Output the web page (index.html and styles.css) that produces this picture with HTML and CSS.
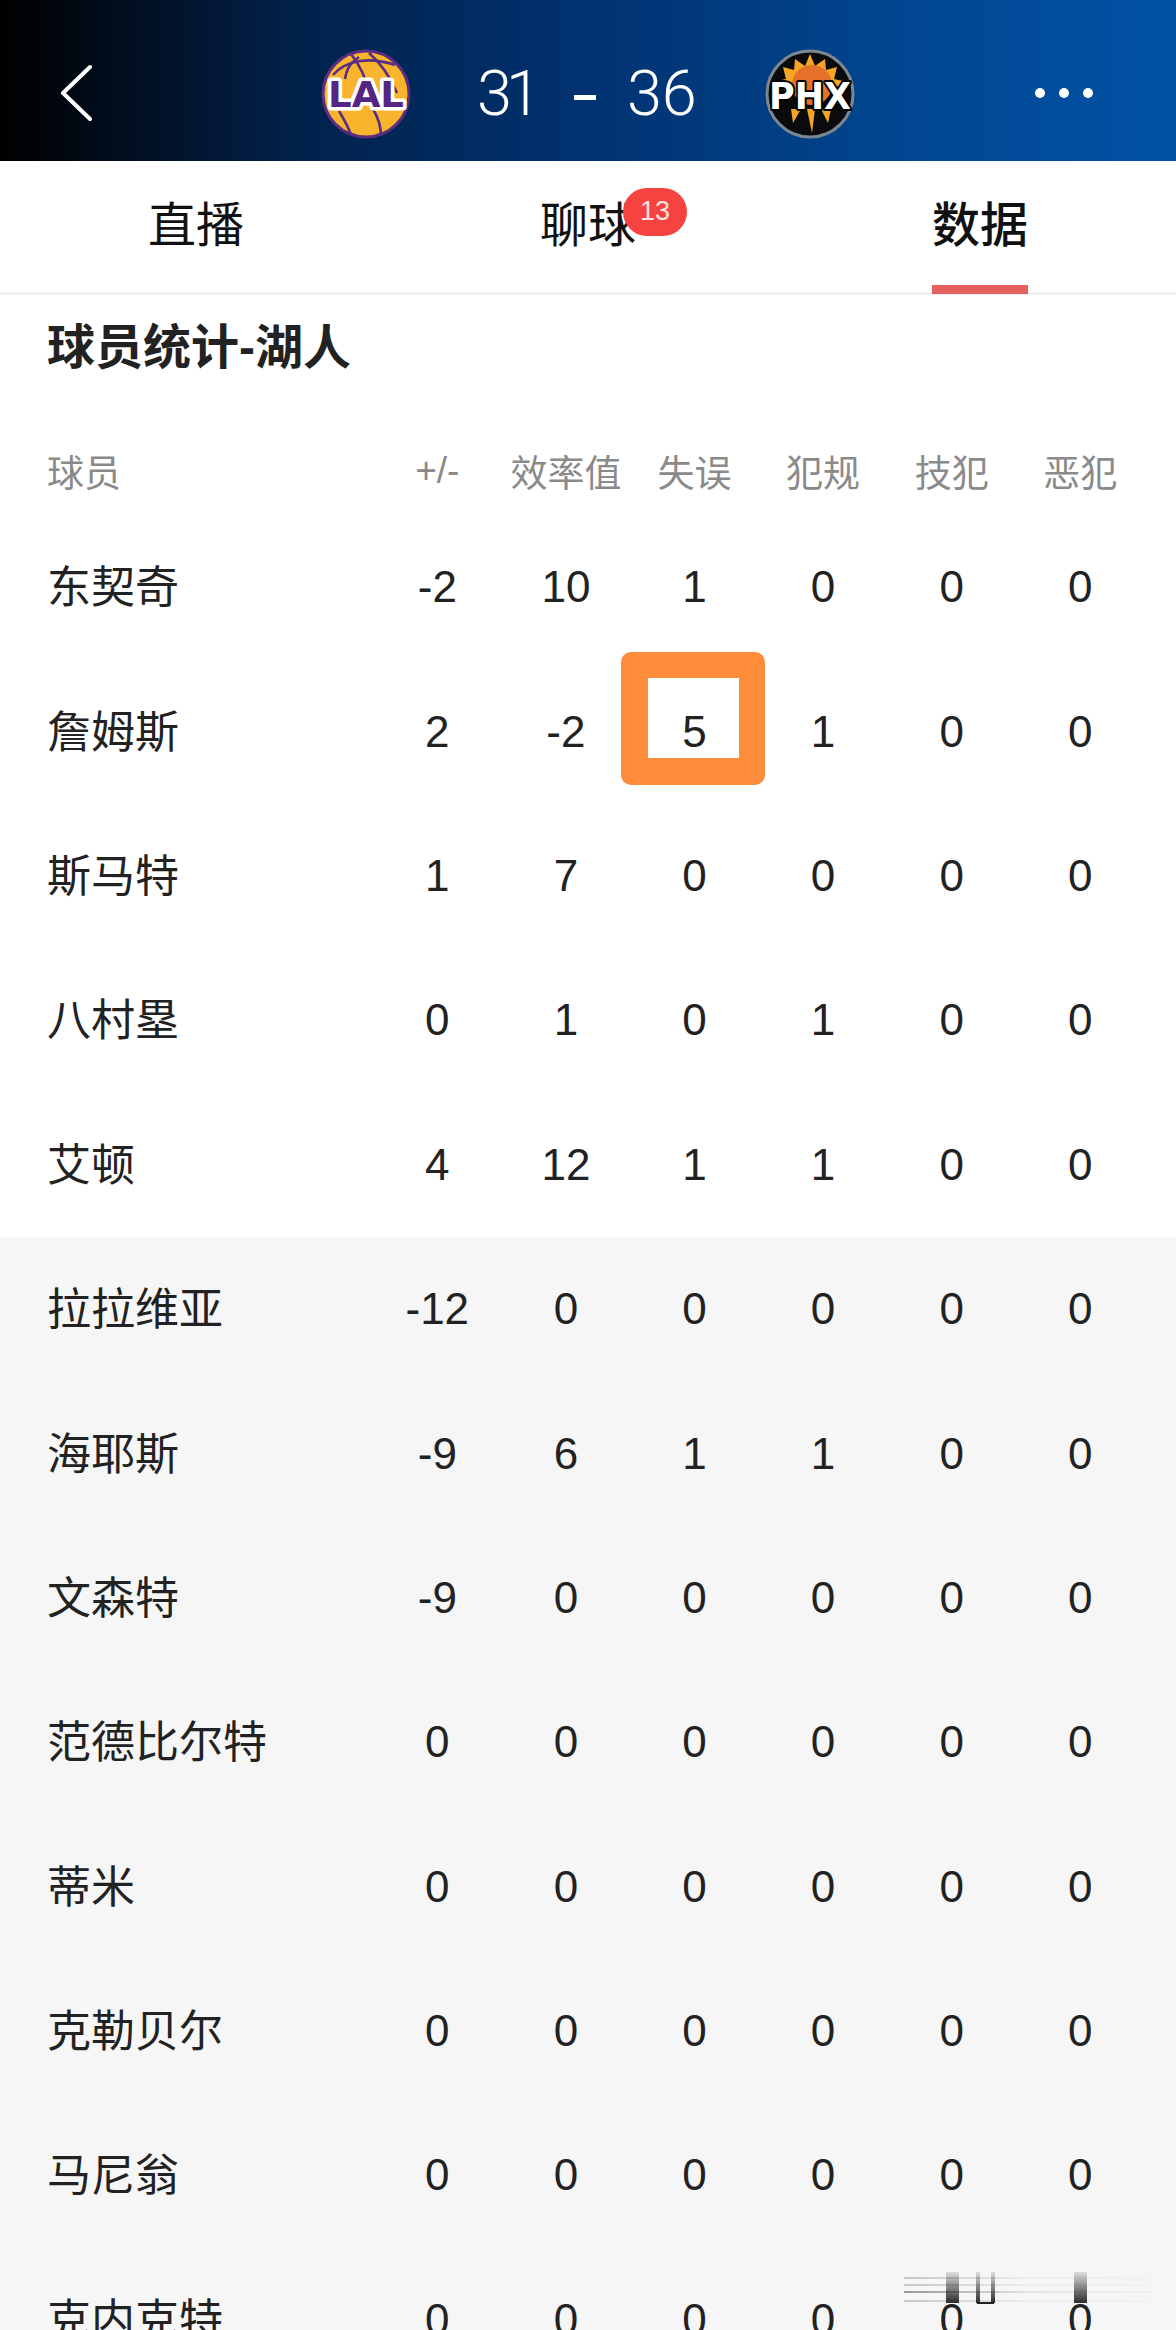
FILE: index.html
```html
<!DOCTYPE html>
<html lang="zh-CN">
<head>
<meta charset="utf-8">
<title>球员统计</title>
<link rel="stylesheet" href="styles.css">
</head>
<body>
<div class="page">
  <header class="top">
    <svg class="back" viewBox="0 0 32 58" width="32" height="58" aria-hidden="true"><path d="M30 3 L3 29 L30 55" fill="none" stroke="#fff" stroke-width="4" stroke-linecap="round" stroke-linejoin="round"/></svg>
    <div class="match">
      <svg class="logo" viewBox="0 0 90 90" width="90" height="90" aria-hidden="true">
        <circle cx="45" cy="45" r="43" fill="#f7b42c" stroke="#5a2d81" stroke-width="3"/>
        <g fill="none" stroke="#5a2d81" stroke-width="2.6">
          <path d="M12 26 C26 10 50 8 74 16"/>
          <path d="M30 5 C42 20 46 34 48 44"/>
          <path d="M48 4 C62 16 70 30 76 44"/>
          <path d="M24 30 C26 18 30 14 38 8"/>
          <path d="M18 62 C24 72 28 80 30 86"/>
          <path d="M52 60 C58 70 60 80 60 87"/>
        </g>
        <text class="logo-lal" x="45" y="58" textLength="76" lengthAdjust="spacingAndGlyphs">LAL</text>
      </svg>
      <div class="score">
        <span class="score-home">31</span><span class="dash"></span><span class="score-away">36</span>
      </div>
      <svg class="logo" viewBox="0 0 90 90" width="90" height="90" aria-hidden="true">
        <circle cx="45" cy="45" r="43" fill="#0b0b0d" stroke="#7d8791" stroke-width="3"/>
        <polygon points="45,5 50,17 60,10 61,21 72,18 69,30 78,32 70,42 20,42 12,32 21,30 18,18 29,21 30,10 40,17" fill="#f5a623"/>
        <circle cx="47" cy="36" r="20" fill="#e5702a"/>
        <polygon points="42,60 50,60 47,84" fill="#f5a623"/>
        <polygon points="26,60 36,60 28,74" fill="#f5a623"/>
        <polygon points="56,60 66,60 63,74" fill="#f5a623"/>
        <text class="logo-phx" x="45" y="60" textLength="82" lengthAdjust="spacingAndGlyphs">PHX</text>
      </svg>
    </div>
    <div class="more"><i></i><i></i><i></i></div>
  </header>

  <nav class="tabs">
    <div class="tab"><span class="tab-label">直播</span></div>
    <div class="tab"><span class="tab-label">聊球<b class="badge">13</b></span></div>
    <div class="tab tab-active"><span class="tab-label">数据</span></div>
  </nav>

  <h1 class="title">球员统计-湖人</h1>

  <div class="row row-head"><div class="name">球员</div><div>+/-</div><div>效率值</div><div>失误</div><div>犯规</div><div>技犯</div><div>恶犯</div></div>

  <section class="starters">
    <div class="row"><div class="name">东契奇</div><div>-2</div><div>10</div><div>1</div><div>0</div><div>0</div><div>0</div></div>
    <div class="row"><div class="name">詹姆斯</div><div>2</div><div>-2</div><div>5</div><div>1</div><div>0</div><div>0</div></div>
    <div class="row"><div class="name">斯马特</div><div>1</div><div>7</div><div>0</div><div>0</div><div>0</div><div>0</div></div>
    <div class="row"><div class="name">八村塁</div><div>0</div><div>1</div><div>0</div><div>1</div><div>0</div><div>0</div></div>
    <div class="row"><div class="name">艾顿</div><div>4</div><div>12</div><div>1</div><div>1</div><div>0</div><div>0</div></div>
  </section>

  <section class="bench">
    <div class="row"><div class="name">拉拉维亚</div><div>-12</div><div>0</div><div>0</div><div>0</div><div>0</div><div>0</div></div>
    <div class="row"><div class="name">海耶斯</div><div>-9</div><div>6</div><div>1</div><div>1</div><div>0</div><div>0</div></div>
    <div class="row"><div class="name">文森特</div><div>-9</div><div>0</div><div>0</div><div>0</div><div>0</div><div>0</div></div>
    <div class="row"><div class="name">范德比尔特</div><div>0</div><div>0</div><div>0</div><div>0</div><div>0</div><div>0</div></div>
    <div class="row"><div class="name">蒂米</div><div>0</div><div>0</div><div>0</div><div>0</div><div>0</div><div>0</div></div>
    <div class="row"><div class="name">克勒贝尔</div><div>0</div><div>0</div><div>0</div><div>0</div><div>0</div><div>0</div></div>
    <div class="row"><div class="name">马尼翁</div><div>0</div><div>0</div><div>0</div><div>0</div><div>0</div><div>0</div></div>
    <div class="row"><div class="name">克内克特</div><div>0</div><div>0</div><div>0</div><div>0</div><div>0</div><div>0</div></div>
  </section>

  <div class="highlight"></div>

  <svg class="watermark" viewBox="0 0 250 34" width="250" height="34" aria-hidden="true">
    <defs>
      <linearGradient id="wmv" x1="0" y1="0" x2="0" y2="1"><stop offset="0" stop-color="#222" stop-opacity=".12"/><stop offset="1" stop-color="#222" stop-opacity=".95"/></linearGradient>
      <linearGradient id="wmh" x1="0" y1="0" x2="1" y2="0"><stop offset="0" stop-color="#222" stop-opacity=".45"/><stop offset=".5" stop-color="#222" stop-opacity=".08"/><stop offset="1" stop-color="#222" stop-opacity=".03"/></linearGradient>
    </defs>
    <rect x="0" y="5" width="250" height="2" fill="url(#wmh)" opacity=".5"/>
    <rect x="0" y="12" width="250" height="2" fill="url(#wmh)" opacity=".5"/>
    <rect x="0" y="19" width="250" height="2" fill="url(#wmh)"/>
    <rect x="0" y="28" width="250" height="2" fill="url(#wmh)" opacity=".5"/>
    <rect x="42" y="0" width="13" height="31" fill="url(#wmv)"/>
    <rect x="72" y="0" width="4" height="31" fill="url(#wmv)"/>
    <rect x="87" y="0" width="4" height="31" fill="url(#wmv)"/>
    <rect x="73" y="30" width="17" height="2" fill="#222"/>
    <rect x="170" y="0" width="13" height="31" fill="url(#wmv)"/>
  </svg>
</div>
</body>
</html>
```
FILE: styles.css
```css
* { box-sizing: border-box; }
html, body { margin: 0; padding: 0; }
body {
  width: 1176px;
  height: 2330px;
  overflow: hidden;
  background: #fff;
  color: #222;
  font-family: "Liberation Sans", "Noto Sans CJK SC", sans-serif;
}
.page { position: relative; width: 1176px; height: 2330px; overflow: hidden; }

.top {
  height: 161px;
  display: flex;
  align-items: center;
  justify-content: space-between;
  padding: 24px 83px 0 60px;
  background: linear-gradient(90deg, #000 0%, #02214a 25%, #013271 50%, #01458f 75%, #0152a6 100%);
}
.back { flex: none; }
.match {
  display: flex;
  align-items: center;
  position: absolute;
  left: 321px;
  top: 49px;
}
.logo { display: block; flex: none; }
.logo-lal, .logo-phx {
  font-family: "DejaVu Sans", sans-serif;
  font-weight: 700;
  text-anchor: middle;
  paint-order: stroke;
  stroke-linejoin: round;
}
.logo-lal { font-size: 35px; fill: #552583; stroke: #fff; stroke-width: 7px; }
.logo-phx { font-size: 37px; fill: #fff; stroke: #000; stroke-width: 4px; }
.score {
  width: 354px;
  height: 84px;
  display: flex;
  align-items: center;
  padding-left: 66px;
  color: #fff;
  font-family: "Roboto", sans-serif;
  font-weight: 300;
  font-size: 63px;
  line-height: 84px;
}
.score-home { letter-spacing: -6px; }
.dash { width: 22px; height: 5px; background: #fff; margin: 6px 31px 0 39px; }
.more { display: flex; gap: 14px; }
.more i { display: block; width: 10px; height: 10px; border-radius: 50%; background: #fff; }

.tabs {
  display: flex;
  height: 134px;
  border-bottom: 3px solid #f1f1f1;
}
.tab {
  flex: 1;
  display: flex;
  justify-content: center;
  padding-top: 29px;
}
.tab-label {
  position: relative;
  display: block;
  height: 104px;
  font-size: 48px;
  line-height: 72px;
  color: #111;
}
.tab-active .tab-label { font-weight: 500; border-bottom: 9px solid #e85f5f; }
.badge {
  position: absolute;
  left: 83px;
  top: -2px;
  width: 64px;
  height: 48px;
  border-radius: 24px;
  background: #f5443f;
  color: #ffe3e0;
  font-weight: 400;
  font-size: 27px;
  line-height: 46px;
  text-align: center;
}

.title {
  margin: 0;
  height: 106px;
  padding-left: 47px;
  font-size: 48px;
  font-weight: 700;
  line-height: 106px;
  color: #222;
}
.row {
  display: grid;
  grid-template-columns: 373px repeat(6, 128.6px);
  align-items: center;
  height: 144.4px;
  font-size: 44px;
  text-align: center;
  color: #222;
}
.row .name { text-align: left; padding: 0 0 6px 47px; }
.row-head {
  height: 114px;
  padding-top: 26px;
  font-size: 37px;
  color: #8a8a8a;
}
.row-head .name { padding-bottom: 0; }
.bench { background: #f6f6f6; }

.highlight {
  position: absolute;
  left: 621px;
  top: 652px;
  width: 144px;
  height: 133px;
  border-style: solid;
  border-width: 26px 26px 27px 27px;
  border-color: #ff8c3a;
  border-radius: 10px;
}
.watermark { position: absolute; left: 904px; top: 2272px; }
```
